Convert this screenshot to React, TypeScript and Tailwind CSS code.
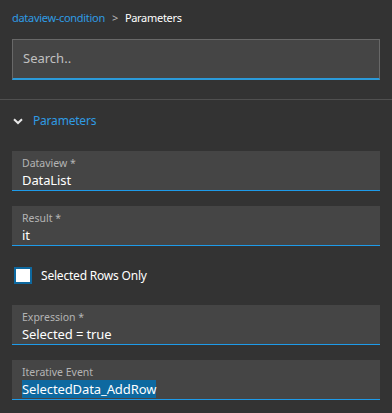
import { useState } from "react";

function Field({ label, value, selected }: { label: string; value: string; selected?: boolean }) {
  return (
    <div className="mx-3 h-10 bg-[#454545] border-b border-[#1e9be9] px-[10px] pt-[5px] flex flex-col">
      <span className="text-[10.5px] leading-[15px] text-[#b4b4b4]">{label}</span>
      <span className="text-[13px] leading-[18px] text-white tracking-[-0.1px]">
        {selected ? <span className="bg-[#0e69a0]">{value}</span> : value}
      </span>
    </div>
  );
}

export default function App() {
  const [checked, setChecked] = useState(false);

  return (
    <div
      className="w-[392px] h-[413px] bg-[#333333] overflow-hidden"
      style={{ fontFamily: '"Noto Sans", "Open Sans", sans-serif' }}
    >
      <div className="px-3 pt-[9px] h-[39px] text-[11px] leading-[18px] tracking-[-0.3px] flex gap-[7px]">
        <span className="text-[#2f9be3]">dataview-condition</span>
        <span className="text-[#b8b8b8]">&gt;</span>
        <span className="text-white">Parameters</span>
      </div>

      <div className="mx-3 h-[41px] bg-[#454545] border border-[#686868] border-b-[2px] border-b-[#2b9ad9] flex items-center px-[10px]">
        <span className="text-[13px] text-[#c0c0c0]">Search..</span>
      </div>

      <div className="mt-[19px] border-t border-[#505050]" />

      <div className="h-[40px] flex items-center px-[13px] gap-[10px] mt-[1px]">
        <svg width="10" height="7" viewBox="0 0 10 7">
          <path d="M1 1.2 L5 5 L9 1.2" fill="none" stroke="#e8e8e8" strokeWidth="2" />
        </svg>
        <span className="text-[12px] text-[#2f9be3] tracking-[-0.2px]">Parameters</span>
      </div>

      <div className="mt-[10px] flex flex-col">
        <Field label="Dataview *" value="DataList" />
        <div className="h-[15px]" />
        <Field label="Result *" value="it" />

        <div
          className="h-[59px] flex items-center pl-[14px] gap-[9px] cursor-pointer"
          onClick={() => setChecked(!checked)}
        >
          <div className="w-[18px] h-[17px] bg-white border-2 border-[#0e69a0]" />
          <span className="text-[12px] text-white tracking-[-0.2px]">Selected Rows Only</span>
        </div>

        <Field label="Expression *" value="Selected = true" />
        <div className="h-[15px]" />
        <Field label="Iterative Event" value="SelectedData_AddRow" selected />
      </div>
    </div>
  );
}
